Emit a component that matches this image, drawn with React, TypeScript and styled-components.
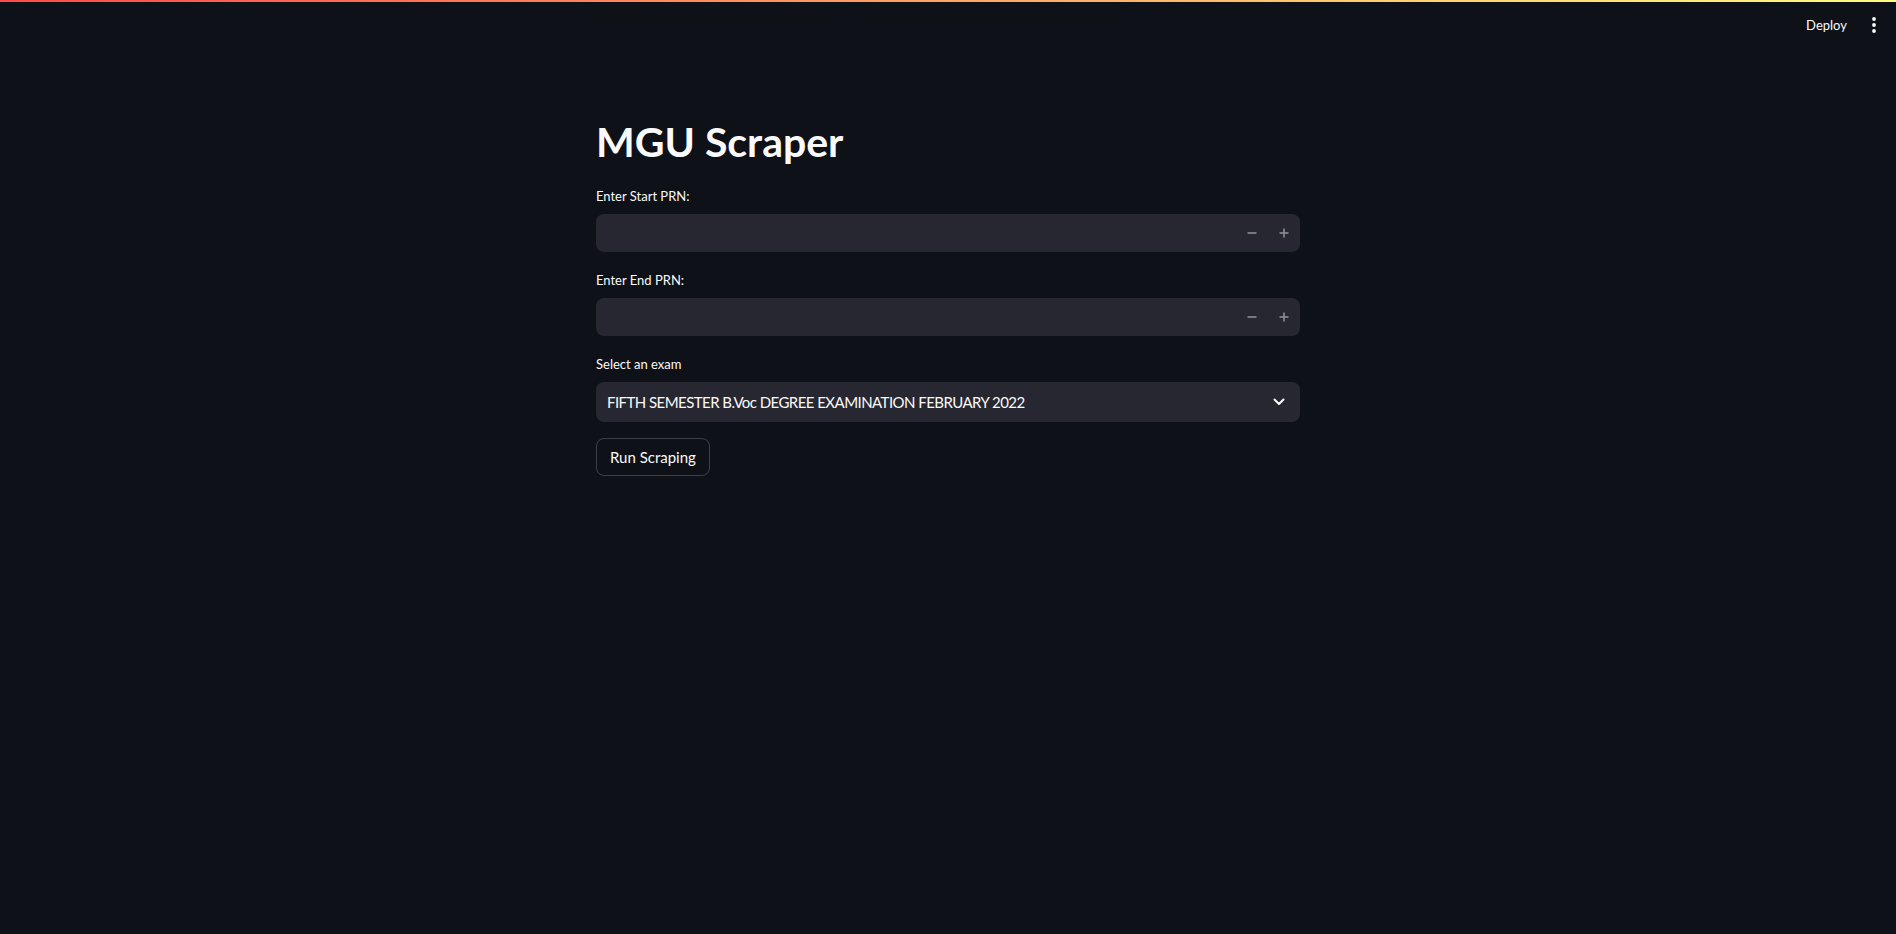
import React from "react";
import styled, { createGlobalStyle } from "styled-components";

const GlobalStyle = createGlobalStyle`
  html, body {
    margin: 0;
    padding: 0;
    background: #0e1117;
    color: #fafafa;
    font-family: "Lato", "Noto Sans", sans-serif;
  }
  * { box-sizing: border-box; }
`;

const Page = styled.div`
  min-height: 934px;
  display: flex;
  flex-direction: column;
  background: #0e1117;
`;

const Decoration = styled.div`
  height: 2px;
  background: linear-gradient(90deg, rgb(255, 75, 75), rgb(255, 253, 128));
`;

const Header = styled.header`
  height: 46px;
  display: flex;
  align-items: center;
  justify-content: flex-end;
  padding-right: 17px;
  gap: 22px;
`;

const DeployButton = styled.button`
  background: transparent;
  border: none;
  color: #fafafa;
  font-family: inherit;
  font-size: 13px;
  padding: 4px 0;
  cursor: pointer;
`;

const MenuButton = styled.button`
  background: transparent;
  border: none;
  padding: 0;
  width: 10px;
  height: 20px;
  display: flex;
  align-items: center;
  justify-content: center;
  cursor: pointer;
`;

const Main = styled.main`
  width: 704px;
  margin: 0 auto;
  padding-top: 71px;
  display: flex;
  flex-direction: column;
`;

const Title = styled.h1`
  margin: 0 0 19px;
  font-size: 41px;
  line-height: 46px;
  font-weight: 700;
  color: #fafafa;
`;

const Form = styled.div`
  display: flex;
  flex-direction: column;
  gap: 16px;
`;

const Field = styled.div`
  display: flex;
  flex-direction: column;
`;

const Label = styled.label`
  font-size: 13px;
  line-height: 25px;
  margin-bottom: 5px;
  color: #fafafa;
`;

const NumberBox = styled.div`
  height: 38px;
  background: #262730;
  border-radius: 8px;
  display: flex;
  align-items: stretch;
`;

const NumberInput = styled.input`
  flex: 1;
  min-width: 0;
  background: transparent;
  border: none;
  outline: none;
  color: #fafafa;
  font-family: inherit;
  font-size: 15px;
  padding: 0 12px;
`;

const StepButton = styled.button`
  width: 32px;
  background: transparent;
  border: none;
  padding: 0;
  display: flex;
  align-items: center;
  justify-content: center;
  cursor: pointer;
`;

const SelectBox = styled.div`
  height: 40px;
  background: #262730;
  border-radius: 8px;
  display: flex;
  align-items: center;
  justify-content: space-between;
  padding: 0 15px 0 11px;
  font-size: 15px;
  letter-spacing: -0.55px;
  color: #fafafa;
  cursor: pointer;
`;

const SelectValue = styled.span`
  white-space: nowrap;
`;

const ActionRow = styled.div`
  display: flex;
`;

const RunButton = styled.button`
  height: 38px;
  padding: 0 13px;
  background: transparent;
  border: 1px solid rgba(250, 250, 250, 0.2);
  border-radius: 8px;
  color: #fafafa;
  font-family: inherit;
  font-size: 15px;
  cursor: pointer;
`;

const StepColor = "#8b8d99";

const MinusIcon = () => (
  <svg width="10" height="10" viewBox="0 0 10 10">
    <rect x="0.5" y="4.2" width="9" height="1.6" fill={StepColor} />
  </svg>
);

const PlusIcon = () => (
  <svg width="10" height="10" viewBox="0 0 10 10">
    <rect x="0.5" y="4.2" width="9" height="1.6" fill={StepColor} />
    <rect x="4.2" y="0.5" width="1.6" height="9" fill={StepColor} />
  </svg>
);

const Chevron = () => (
  <svg width="12" height="8" viewBox="0 0 12 8">
    <path d="M1.5 1.5 L6 6 L10.5 1.5" fill="none" stroke="#fafafa" strokeWidth="2" strokeLinecap="round" strokeLinejoin="round" />
  </svg>
);

const Kebab = () => (
  <svg width="4" height="16" viewBox="0 0 4 16">
    <circle cx="2" cy="2" r="1.9" fill="#fafafa" />
    <circle cx="2" cy="8" r="1.9" fill="#fafafa" />
    <circle cx="2" cy="14" r="1.9" fill="#fafafa" />
  </svg>
);

const NumberField = ({ label }: { label: string }) => (
  <Field>
    <Label>{label}</Label>
    <NumberBox>
      <NumberInput type="text" aria-label={label} />
      <StepButton aria-label="decrement">
        <MinusIcon />
      </StepButton>
      <StepButton aria-label="increment">
        <PlusIcon />
      </StepButton>
    </NumberBox>
  </Field>
);

export default function App() {
  return (
    <>
      <GlobalStyle />
      <Page>
        <Decoration />
        <Header>
          <DeployButton>Deploy</DeployButton>
          <MenuButton aria-label="menu">
            <Kebab />
          </MenuButton>
        </Header>
        <Main>
          <Title>MGU Scraper</Title>
          <Form>
            <NumberField label="Enter Start PRN:" />
            <NumberField label="Enter End PRN:" />
            <Field>
              <Label>Select an exam</Label>
              <SelectBox>
                <SelectValue>FIFTH SEMESTER B.Voc DEGREE EXAMINATION FEBRUARY 2022</SelectValue>
                <Chevron />
              </SelectBox>
            </Field>
            <ActionRow>
              <RunButton>Run Scraping</RunButton>
            </ActionRow>
          </Form>
        </Main>
      </Page>
    </>
  );
}
